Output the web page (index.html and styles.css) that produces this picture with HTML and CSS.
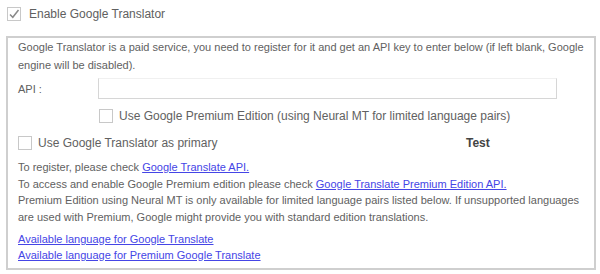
FILE: index.html
```html
<!DOCTYPE html>
<html lang="en">
<head>
    <meta charset="UTF-8">
    <title>Google Translator</title>
    <link rel="stylesheet" href="styles.css">
</head>
<body>
    <div class="enable-row">
        <span class="check checked">
            <svg width="12" height="12" viewBox="0 0 12 12"><path d="M2 6.5 L4.8 9.3 L10.5 2" fill="none" stroke="#8a8a8a" stroke-width="1.5"/></svg>
        </span>
        <span class="enable-label">Enable Google Translator</span>
    </div>

    <div class="panel">
        <p class="intro">Google Translator is a paid service, you need to register for it and get an API key to enter below (if left blank, Google engine will be disabled).</p>
        <div class="api-row">
            <span class="api-label">API :</span>
            <span class="api-input"></span>
        </div>
        <div class="premium-row">
            <span class="check"></span>
            <span>Use Google Premium Edition (using Neural MT for limited language pairs)</span>
        </div>
        <div class="primary-row">
            <span class="check"></span>
            <span class="primary-label">Use Google Translator as primary</span>
            <span class="test">Test</span>
        </div>
        <div class="notes">
            <p>To register, please check <a href="#">Google Translate API.</a></p>
            <p>To access and enable Google Premium edition please check <a href="#">Google Translate Premium Edition API.</a></p>
            <p>Premium Edition using Neural MT is only available for limited language pairs listed below. If unsupported languages are used with Premium, Google might provide you with standard edition translations.</p>
        </div>
        <div class="links">
            <a href="#">Available language for Google Translate</a>
            <a href="#">Available language for Premium Google Translate</a>
        </div>
    </div>
</body>
</html>
```

FILE: styles.css
```css
body {
    font-family: 'Liberation Sans', Arial, sans-serif;
    margin: 0;
    padding: 7px 4px 0 6px;
    background-color: #fff;
    color: #616161;
    font-size: 12px;
}
.check {
    display: inline-block;
    width: 12px;
    height: 12px;
    border: 1px solid #c8c8c8;
    background-color: #fff;
    flex: none;
}
.check svg {
    display: block;
}
.enable-row {
    display: flex;
    align-items: center;
    padding-left: 1px;
    height: 14px;
}
.enable-label {
    font-size: 12px;
    margin-left: 8px;
    color: #606060;
}
.panel {
    margin-top: 15px;
    border: 2px solid #cfcfcf;
    padding: 1px 10px 0 10px;
    height: 234px;
    box-sizing: border-box;
    width: 590px;
    font-size: 11px;
}
.intro {
    margin: 0;
    line-height: 17.5px;
}
.api-row {
    display: flex;
    align-items: center;
    margin-top: 4px;
}
.api-label {
    width: 80px;
}
.api-input {
    width: 457px;
    height: 19px;
    border: 1px solid #d6d6d6;
    border-top-color: #f0f0f0;
}
.premium-row {
    display: flex;
    align-items: center;
    margin: 10px 0 0 81px;
    font-size: 12px;
}
.premium-row span:last-child {
    margin-left: 6px;
}
.primary-row {
    display: flex;
    align-items: center;
    margin-top: 13px;
    font-size: 12px;
}
.primary-label {
    margin-left: 6px;
    width: 428px;
}
.test {
    font-weight: bold;
    color: #444;
}
.notes {
    margin-top: 9px;
}
.notes p {
    margin: 0;
    line-height: 16.7px;
}
.links {
    margin-top: 5px;
    display: flex;
    flex-direction: column;
    align-items: flex-start;
    line-height: 16px;
}
a {
    color: #4545e6;
}
```
